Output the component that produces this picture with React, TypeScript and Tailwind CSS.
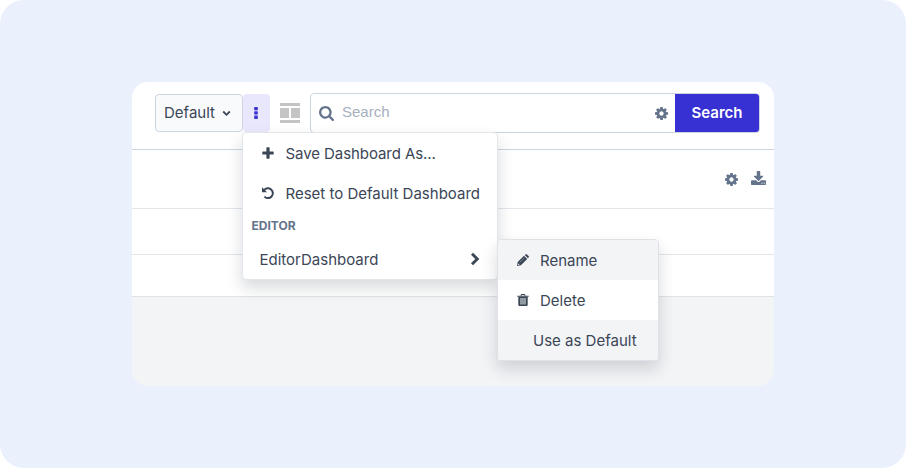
import type { ReactNode } from "react";

function Icon({ box, className, children }: { box: string; className: string; children: ReactNode }) {
  return (
    <svg viewBox={box} className={`block shrink-0 ${className}`} fill="currentColor" aria-hidden="true">
      {children}
    </svg>
  );
}

function Gear() {
  return (
    <Icon box="128 128 1536 1536" className="size-[13px] text-[#64748b]">
      <path d="M1152 896q0-106-75-181t-181-75-181 75-75 181 75 181 181 75 181-75 75-181zm512-109v222q0 12-8 23t-20 13l-185 28q-19 54-39 91 35 50 107 138 10 12 10 25t-9 23q-27 37-99 108t-94 71q-12 0-26-9l-138-108q-44 23-91 38-16 136-29 186-7 28-36 28h-222q-14 0-24.500-8.500t-11.500-21.500l-28-184q-49-16-90-37l-141 107q-10 9-25 9-14 0-25-11-126-114-165-168-7-10-7-23 0-12 8-23 15-21 51-66.500t54-70.500q-27-50-41-99l-183-27q-13-2-21-12.500t-8-23.500v-222q0-12 8-23t19-13l186-28q14-46 39-92-40-57-107-138-10-12-10-24 0-10 9-23 26-36 98.500-107.500t94.500-71.500q13 0 26 10l138 107q44-23 91-38 16-136 29-186 7-28 36-28h222q14 0 24.500 8.500t11.500 21.500l28 184q49 16 90 37l142-107q9-9 24-9 13 0 25 10 129 119 165 170 7 8 7 22 0 12-8 23-15 21-51 66.500t-54 70.500q26 50 41 98l183 28q13 2 21 12.500t8 23.500z" />
    </Icon>
  );
}

function Toolbar() {
  return (
    <div className="flex h-[68px] items-start border-b border-[#cbd5e1] pt-[11px] pl-[23px]">
      <button className="mt-px flex h-[38px] w-[88px] items-center justify-between rounded-[4px] border border-[#cbd5e1] bg-[#f8fafc] pr-[11px] pl-2 text-[15px]">
        Default
        <Icon box="0 0 9 7" className="h-[7px] w-[9px]">
          <path d="M1.200 1.500L4.500 4.800 7.800 1.500" fill="none" stroke="currentColor" strokeWidth="1.800" />
        </Icon>
      </button>
      <button className="mt-px flex h-[38px] w-[27px] items-center justify-center rounded-[4px] bg-[#e9e7fc] pr-px text-[#3730d2]">
        <Icon box="0 0 4 12" className="h-3 w-1">
          <rect x="0.200" width="3.600" height="3.300" rx="0.400" />
          <rect x="0.200" y="4.300" width="3.600" height="3.300" rx="0.400" />
          <rect x="0.200" y="8.600" width="3.600" height="3.300" rx="0.400" />
        </Icon>
      </button>
      <Icon box="0 0 20 20" className="mt-[10px] ml-[10px] size-5 text-[#c4c4c4]">
        <path d="M0 0h20v3H0zM0 5h9v10H0zM11 5h9v10h-9zM0 17h20v3H0z" />
      </Icon>
      <div className="ml-[10px] flex h-10 w-[450px] items-center overflow-hidden rounded-[4px] border border-[#cbd5e1] bg-white">
        <Icon box="64 128 1664 1664" className="ml-2 size-[15px] text-[#64748b]">
          <path d="M1216 832q0-185-131.500-316.500t-316.500-131.500-316.500 131.500-131.500 316.500 131.500 316.500 316.500 131.500 316.500-131.500 131.500-316.500zm512 832q0 52-38 90t-90 38q-54 0-90-38l-343-342q-179 124-399 124-143 0-273.500-55.500t-225-150-150-225-55.500-273.500 55.500-273.500 150-225 225-150 273.500-55.500 273.500 55.500 225 150 150 225 55.500 273.500q0 220-124 399l343 343q37 37 37 90z" />
        </Icon>
        <span className="ml-2 grow pb-px font-['Liberation_Sans',sans-serif] text-[15px] text-[#a7b0be]">Search</span>
        <Gear />
        <button className="ml-[7px] h-full w-[84px] bg-[#3730d2] text-[15px] font-semibold text-white">Search</button>
      </div>
    </div>
  );
}

function DashboardMenu() {
  return (
    <div className="absolute top-[50px] left-[110px] flex h-[148px] w-[256px] flex-col rounded-[4px] border border-[#e2e5ea] bg-white shadow-[0_8px_16px_rgba(15,23,42,0.16)]">
      <div className="flex h-10 items-center pl-[19px]">
        <Icon box="0 0 12 12" className="size-3">
          <path d="M4.400 1q0-.7.700-.7h1.800q.7 0 .7.700v3.400H11q.7 0 .7.700v1.800q0 .7-.7.700H7.600V11q0 .7-.7.700H5.100q-.7 0-.7-.7V7.600H1q-.7 0-.7-.7V5.100q0-.7.700-.7h3.400z" />
        </Icon>
        <span className="ml-[11.500px] pt-0.5 tracking-[-0.005em]">Save Dashboard As...</span>
      </div>
      <div className="flex h-10 items-center pl-[19px]">
        <Icon box="0 0 12 12" className="size-3">
          <path d="M2 3.300A4.900 4.900 0 1 1 2.400 9.600" fill="none" stroke="currentColor" strokeWidth="2" />
          <path d="M0 .3v5h5z" />
        </Icon>
        <span className="ml-[11.500px] pt-0.5">Reset to Default Dashboard</span>
      </div>
      <div className="flex h-[26px] items-center pl-[8.500px] text-[12px] font-bold text-[#64748b]">EDITOR</div>
      <div className="flex h-10 items-center justify-between pr-[17px] pl-[16.500px]">
        <span className="pt-0.5">EditorDashboard</span>
        <Icon box="0 0 10 14" className="h-[14px] w-[10px]">
          <path d="M2 1.700L7.300 7 2 12.300" fill="none" stroke="currentColor" strokeWidth="2.900" />
        </Icon>
      </div>
    </div>
  );
}

function ActionsMenu() {
  return (
    <div className="absolute top-[157px] left-[365px] w-[162px] overflow-hidden rounded-[4px] border border-[#dfe3e8] bg-white shadow-[0_8px_16px_rgba(15,23,42,0.16)]">
      <div className="flex h-10 items-center bg-[#f3f4f6] pl-[19px]">
        <Icon box="0 0 12 12" className="size-3">
          <path d="M0 12l.7-3.900 6.300-6.300 3.200 3.200-6.300 6.300zM7.700 1.100L8.500.4q.7-.6 1.400 0l1.700 1.700q.6.700 0 1.400l-.7.800zM1.200 9.400l-.3 1.700 1.700-.3z" fillRule="evenodd" />
          <path d="M2.700 8.400L7.200 3.900" stroke="#a6adb7" strokeWidth="0.600" />
        </Icon>
        <span className="ml-[11px] pt-0.5">Rename</span>
      </div>
      <div className="flex h-10 items-center pl-[19px]">
        <Icon box="0 0 12 12" className="size-3">
          <path d="M3.500 1.700L4.200.1h3.600l.7 1.600h3.200v1H.3v-1zM4.400 1.700h3.200L7.300.9H4.700z" fillRule="evenodd" />
          <path d="M1.300 2.700h9.400V11q0 1-1 1H2.300q-1 0-1-1z" />
          <path d="M3 4h6v6.600H3z" fill="#929aa3" />
        </Icon>
        <span className="ml-[11px] pt-0.5">Delete</span>
      </div>
      <div className="flex h-10 items-center bg-[#f3f4f6] pt-0.5 pl-[35px]">Use as Default</div>
    </div>
  );
}

export default function App() {
  return (
    <div className="bg-white font-['Inter',sans-serif] text-[15px] text-[#3b4656]">
      <main className="flex h-[468px] justify-center rounded-[24px] bg-[#eaf1fd] pt-[82px]">
        <section className="relative h-[304px] w-[642px]">
          <div className="flex h-full flex-col overflow-hidden rounded-[16px] bg-[#f3f4f6]">
            <div className="bg-white">
              <Toolbar />
              <div className="flex h-[59px] items-center justify-end gap-[13px] border-b border-[#e2e5ea] pr-2">
                <Gear />
                <Icon box="64 0 1664 1536" className="mb-0.5 h-[14px] w-[15px] text-[#64748b]">
                  <path d="M1344 1344q0-26-19-45t-45-19-45 19-19 45 19 45 45 19 45-19 19-45zm256 0q0-26-19-45t-45-19-45 19-19 45 19 45 45 19 45-19 19-45zm128-224v320q0 40-28 68t-68 28h-1472q-40 0-68-28t-28-68v-320q0-40 28-68t68-28h465l135 136q58 56 136 56t136-56l136-136h464q40 0 68 28t28 68zm-325-569q17 41-14 70l-448 448q-18 19-45 19t-45-19l-448-448q-31-29-14-70 17-39 59-39h256v-448q0-26 19-45t45-19h256q26 0 45 19t19 45v448h256q42 0 59 39z" />
                </Icon>
              </div>
              <div className="h-[46px] border-b border-[#e2e5ea]" />
              <div className="h-[42px] border-b border-[#dfe3e8]" />
            </div>
          </div>
          <DashboardMenu />
          <ActionsMenu />
        </section>
      </main>
    </div>
  );
}
